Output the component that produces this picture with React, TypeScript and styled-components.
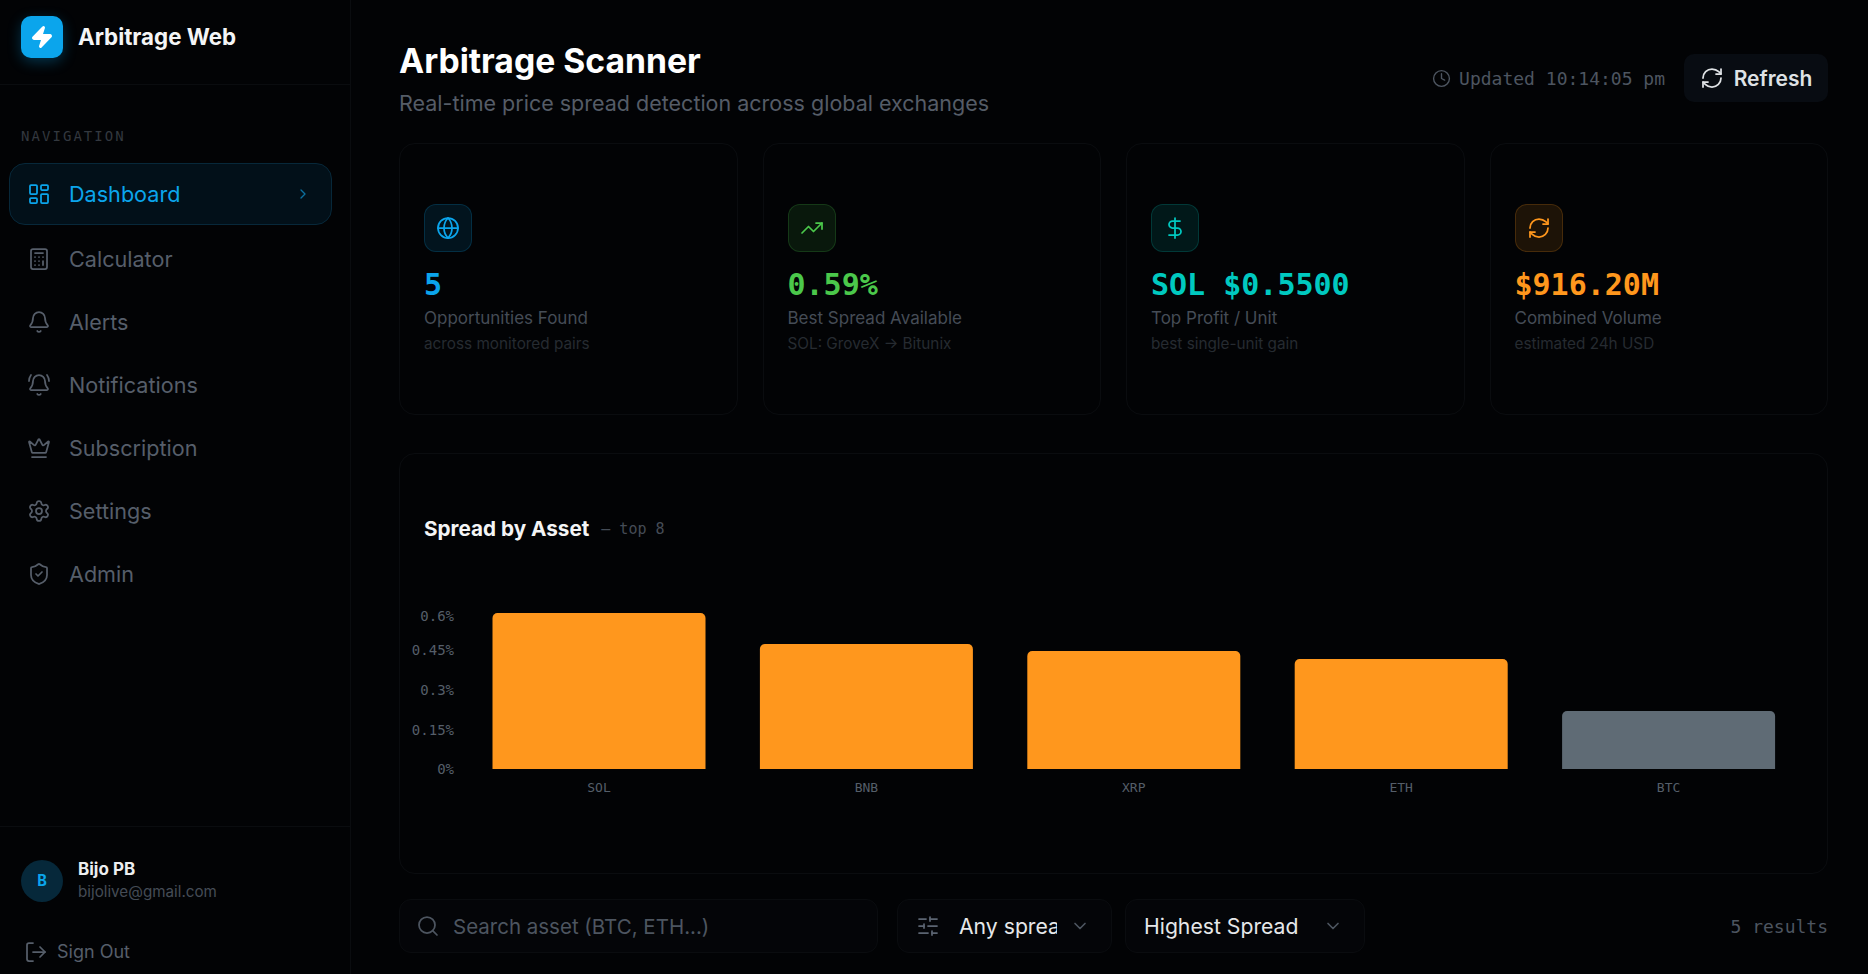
import styled, { createGlobalStyle } from 'styled-components'
import {
  Bell,
  BellRing,
  Calculator,
  ChevronDown,
  ChevronRight,
  Clock,
  Crown,
  DollarSign,
  Globe,
  LayoutDashboard,
  LogOut,
  RefreshCw,
  Search,
  Settings,
  ShieldCheck,
  SlidersHorizontal,
  TrendingUp,
  Zap,
} from 'lucide-react'

const SANS = `Inter, "Noto Sans", sans-serif`
const MONO = `"DejaVu Sans Mono", "Liberation Mono", monospace`

const navItems = [
  { label: 'Dashboard', icon: LayoutDashboard, active: true },
  { label: 'Calculator', icon: Calculator },
  { label: 'Alerts', icon: Bell },
  { label: 'Notifications', icon: BellRing },
  { label: 'Subscription', icon: Crown },
  { label: 'Settings', icon: Settings },
  { label: 'Admin', icon: ShieldCheck },
]

const stats = [
  { value: '5', label: 'Opportunities Found', sub: 'across monitored pairs', color: '#0ba5ec', icon: Globe },
  { value: '0.59%', label: 'Best Spread Available', sub: 'SOL: GroveX → Bitunix', color: '#4bc84b', icon: TrendingUp },
  { value: 'SOL $0.5500', label: 'Top Profit / Unit', sub: 'best single-unit gain', color: '#00c9c0', icon: DollarSign },
  { value: '$916.20M', label: 'Combined Volume', sub: 'estimated 24h USD', color: '#ff971d', icon: RefreshCw },
]

const bars = [
  { asset: 'SOL', height: 156, color: '#ff971d' },
  { asset: 'BNB', height: 125, color: '#ff971d' },
  { asset: 'XRP', height: 118, color: '#ff971d' },
  { asset: 'ETH', height: 110, color: '#ff971d' },
  { asset: 'BTC', height: 58, color: '#5f6b75' },
]

const ticks = [
  { label: '0.6%', y: 37 },
  { label: '0.45%', y: 71 },
  { label: '0.3%', y: 111 },
  { label: '0.15%', y: 151 },
  { label: '0%', y: 190 },
]

const BASELINE = 190

function SpreadChart() {
  return (
    <ChartSvg width="1394" height="234" viewBox="-16 0 1394 234">
      {ticks.map((t) => (
        <text key={t.label} x="30" y={t.y + 5} textAnchor="end" fontSize="14" fill="#555e69" fontFamily={MONO}>
          {t.label}
        </text>
      ))}
      {bars.map((b, i) => {
        const x = 68.5 + i * 267.4
        const top = BASELINE - b.height
        return (
          <g key={b.asset}>
            <path
              d={`M${x} ${BASELINE}V${top + 5}a5 5 0 0 1 5 -5H${x + 208}a5 5 0 0 1 5 5V${BASELINE}Z`}
              fill={b.color}
            />
            <text x={x + 106.5} y={BASELINE + 23} textAnchor="middle" fontSize="13" fill="#555e69" fontFamily={MONO}>
              {b.asset}
            </text>
          </g>
        )
      })}
    </ChartSvg>
  )
}

export default function App() {
  return (
    <Page>
      <GlobalStyle />
      <Sidebar>
        <Brand>
          <Logo>
            <Zap size={24} color="#fff" fill="#fff" />
          </Logo>
          <BrandName>Arbitrage Web</BrandName>
        </Brand>
        <NavSection>
          <NavHeading>NAVIGATION</NavHeading>
          <NavList>
            {navItems.map(({ label, icon: Icon, active }) => (
              <NavItem key={label} $active={active}>
                <Icon size={24} strokeWidth={1.75} />
                <NavLabel>{label}</NavLabel>
                {active && <ChevronRight size={16} color="#0b6f9e" />}
              </NavItem>
            ))}
          </NavList>
        </NavSection>
        <SidebarFooter>
          <UserRow>
            <Avatar>B</Avatar>
            <UserText>
              <UserName>Bijo PB</UserName>
              <UserEmail>bijolive@gmail.com</UserEmail>
            </UserText>
          </UserRow>
          <SignOut>
            <LogOut size={24} strokeWidth={1.75} />
            Sign Out
          </SignOut>
        </SidebarFooter>
      </Sidebar>
      <Main>
        <Header>
          <div>
            <Title>Arbitrage Scanner</Title>
            <Subtitle>Real-time price spread detection across global exchanges</Subtitle>
          </div>
          <HeaderActions>
            <Updated>
              <Clock size={19} strokeWidth={1.75} />
              Updated 10:14:05 pm
            </Updated>
            <RefreshButton>
              <RefreshCw size={24} strokeWidth={1.75} />
              Refresh
            </RefreshButton>
          </HeaderActions>
        </Header>
        <StatGrid>
          {stats.map(({ value, label, sub, color, icon: Icon }) => (
            <StatCard key={label}>
              <StatIcon $color={color}>
                <Icon size={24} strokeWidth={1.75} color={color} />
              </StatIcon>
              <StatValue $color={color}>{value}</StatValue>
              <StatLabel>{label}</StatLabel>
              <StatSub>{sub}</StatSub>
            </StatCard>
          ))}
        </StatGrid>
        <ChartCard>
          <ChartTitle>
            <ChartName>Spread by Asset</ChartName>
            <ChartHint>— top 8</ChartHint>
          </ChartTitle>
          <SpreadChart />
        </ChartCard>
        <Toolbar>
          <SearchBox>
            <Search size={24} strokeWidth={1.75} />
            <SearchText>Search asset (BTC, ETH...)</SearchText>
          </SearchBox>
          <SelectBox $width={215}>
            <SlidersHorizontal size={24} strokeWidth={1.75} color="#5b6471" />
            <SelectText $width={98}>Any spread</SelectText>
            <ChevronDown size={20} color="#4d5560" />
          </SelectBox>
          <SelectBox $width={240}>
            <SelectText>Highest Spread</SelectText>
            <ChevronDown size={20} color="#4d5560" />
          </SelectBox>
          <Results>5 results</Results>
        </Toolbar>
      </Main>
    </Page>
  )
}

const GlobalStyle = createGlobalStyle`
  html, body {
    margin: 0;
    padding: 0;
    background: #020305;
    overflow: hidden;
  }
  * {
    box-sizing: border-box;
  }
  svg {
    flex-shrink: 0;
  }
`

const Page = styled.div`
  display: flex;
  width: 100%;
  height: 100vh;
  overflow: hidden;
  background: #020305;
  color: #fff;
  font-family: ${SANS};
`

const Sidebar = styled.aside`
  width: 351px;
  flex-shrink: 0;
  display: flex;
  flex-direction: column;
  border-right: 1px solid #0a0c0f;
`

const Brand = styled.div`
  height: 85px;
  display: flex;
  align-items: flex-start;
  gap: 15px;
  padding: 16px 21px 0;
  border-bottom: 1px solid #0a0c0f;
`

const Logo = styled.div`
  width: 42px;
  height: 42px;
  border-radius: 10px;
  background: #0ba5ec;
  box-shadow: 0 4px 14px rgba(11, 165, 236, 0.3);
  display: flex;
  align-items: center;
  justify-content: center;
`

const BrandName = styled.div`
  font-size: 22.3px;
  font-weight: 700;
  line-height: 42px;
  color: #f4f5f6;
`

const NavSection = styled.nav`
  flex: 1;
  padding: 42px 9px 0;
`

const NavHeading = styled.div`
  font-family: ${MONO};
  font-size: 14px;
  line-height: 18px;
  letter-spacing: 2.05px;
  color: #33383f;
  padding-left: 12px;
  margin-bottom: 18px;
`

const NavList = styled.div`
  display: flex;
  flex-direction: column;
  gap: 4px;
  width: 323px;
`

const NavItem = styled.div<{ $active?: boolean }>`
  height: ${(p) => (p.$active ? 62 : 59)}px;
  display: flex;
  align-items: center;
  gap: 18px;
  padding: 0 20px 0 17px;
  border-radius: 16px;
  border: 1px solid ${(p) => (p.$active ? '#07283a' : 'transparent')};
  background: ${(p) => (p.$active ? '#021019' : 'transparent')};
  color: ${(p) => (p.$active ? '#0ba5ec' : '#565e6a')};
`

const NavLabel = styled.span`
  flex: 1;
  font-size: 21.6px;
`

const SidebarFooter = styled.div`
  height: 148px;
  border-top: 1px solid #0a0c0f;
  padding: 32px 21px 0;
`

const UserRow = styled.div`
  display: flex;
  align-items: center;
  gap: 15px;
`

const Avatar = styled.div`
  width: 42px;
  height: 42px;
  border-radius: 50%;
  background: #06283a;
  color: #0ba5ec;
  font-family: ${MONO};
  font-size: 16px;
  font-weight: 700;
  display: flex;
  align-items: center;
  justify-content: center;
`

const UserText = styled.div`
  display: flex;
  flex-direction: column;
  gap: 3px;
`

const UserName = styled.div`
  font-size: 17px;
  font-weight: 700;
  line-height: 20px;
  color: #eceef0;
`

const UserEmail = styled.div`
  font-size: 15.2px;
  line-height: 20px;
  color: #454c56;
`

const SignOut = styled.div`
  display: flex;
  align-items: center;
  gap: 9px;
  margin: 38px 0 0 3px;
  font-size: 18px;
  line-height: 24px;
  color: #565e6a;
`

const Main = styled.main`
  flex: 1;
  min-width: 0;
  padding: 37px 40px 0 48px;
  display: flex;
  flex-direction: column;
`

const Header = styled.header`
  height: 82px;
  display: flex;
  align-items: center;
  justify-content: space-between;
  margin-bottom: 24px;
`

const Title = styled.h1`
  margin: 0;
  font-size: 33.7px;
  font-weight: 700;
  line-height: 44px;
  color: #fff;
`

const Subtitle = styled.p`
  margin: 5px 0 0;
  font-size: 21.5px;
  line-height: 30px;
  color: #555c67;
`

const HeaderActions = styled.div`
  display: flex;
  align-items: center;
  gap: 19px;
`

const Updated = styled.div`
  display: flex;
  align-items: center;
  gap: 8px;
  font-family: ${MONO};
  font-size: 18px;
  color: #4d5560;
`

const RefreshButton = styled.button`
  width: 144px;
  height: 48px;
  border: 0;
  border-radius: 10px;
  background: #080c12;
  color: #dfe2e5;
  font-family: ${SANS};
  font-size: 21px;
  font-weight: 600;
  display: flex;
  align-items: center;
  justify-content: center;
  gap: 10px;
`

const StatGrid = styled.section`
  display: grid;
  grid-template-columns: repeat(4, 1fr);
  gap: 25px;
  height: 272px;
  margin-bottom: 38px;
`

const StatCard = styled.div`
  border: 1px solid #0a0c0f;
  border-radius: 16px;
  padding: 0 24px;
  display: flex;
  flex-direction: column;
  justify-content: center;
  align-items: flex-start;
`

const StatIcon = styled.div<{ $color: string }>`
  width: 48px;
  height: 48px;
  border-radius: 12px;
  border: 1px solid ${(p) => p.$color}30;
  background: ${(p) => p.$color}1c;
  display: flex;
  align-items: center;
  justify-content: center;
  margin-bottom: 15px;
`

const StatValue = styled.div<{ $color: string }>`
  font-family: ${MONO};
  font-size: 30px;
  font-weight: 700;
  line-height: 36px;
  color: ${(p) => p.$color};
`

const StatLabel = styled.div`
  margin-top: 3px;
  font-size: 17px;
  line-height: 24px;
  color: #454c56;
`

const StatSub = styled.div`
  margin-top: 3px;
  font-size: 15.3px;
  line-height: 22px;
  color: #262b31;
`

const ChartCard = styled.section`
  height: 421px;
  border: 1px solid #0a0c0f;
  border-radius: 16px;
  padding: 0 24px;
  display: flex;
  flex-direction: column;
  justify-content: center;
  margin-bottom: 25px;
`

const ChartTitle = styled.div`
  display: flex;
  align-items: center;
  gap: 12px;
  height: 28px;
  margin-bottom: 36px;
`

const ChartName = styled.div`
  font-size: 20.7px;
  font-weight: 700;
  color: #f4f5f6;
`

const ChartHint = styled.div`
  font-family: ${MONO};
  font-size: 15px;
  color: #454c56;
`

const ChartSvg = styled.svg`
  display: block;
  flex-shrink: 0;
  margin-left: -16px;
`

const Toolbar = styled.div`
  display: flex;
  align-items: center;
  gap: 13px;
`

const fieldStyles = `
  height: 54px;
  border: 1px solid #0a0c0f;
  border-radius: 12px;
  background: #040508;
  display: flex;
  align-items: center;
`

const SearchBox = styled.div`
  ${fieldStyles}
  width: 479px;
  gap: 13px;
  padding: 0 16px;
  margin-right: 6px;
  color: #4d5560;
`

const SearchText = styled.span`
  font-size: 20.5px;
  color: #4d5560;
`

const SelectBox = styled.div<{ $width: number }>`
  ${fieldStyles}
  width: ${(p) => p.$width}px;
  gap: 13px;
  padding: 0 21px 0 18px;
`

const SelectText = styled.span<{ $width?: number }>`
  font-size: 21.2px;
  color: #e6e8ea;
  white-space: nowrap;
  overflow: hidden;
  margin-left: ${(p) => (p.$width ? 6 : 0)}px;
  flex: ${(p) => (p.$width ? `0 0 ${p.$width}px` : 1)};
`

const Results = styled.div`
  margin-left: auto;
  font-family: ${MONO};
  font-size: 18px;
  color: #4d5560;
`
